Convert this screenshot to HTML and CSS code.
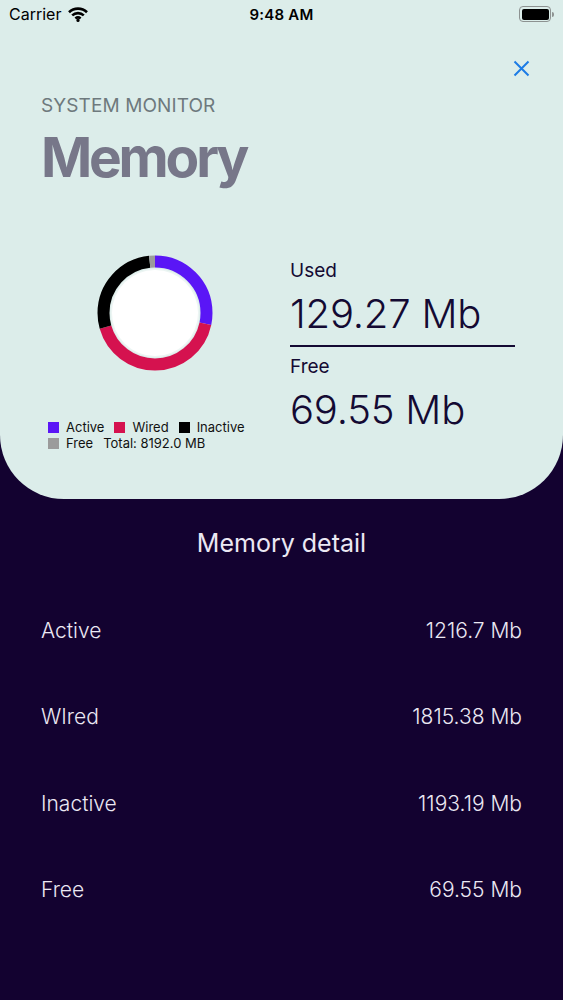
FILE: index.html
```html
<!DOCTYPE html>
<html lang="en">
<head>
    <meta charset="UTF-8">
    <meta name="viewport" content="width=device-width, initial-scale=1.0">
    <title>System Monitor - Memory</title>
    <link rel="stylesheet" href="styles.css">
</head>
<body>

<div class="card">
    <div class="status-bar">
        <div class="carrier">
            <span>Carrier</span>
            <svg class="wifi" width="20" height="15" viewBox="0 0 20 15">
                <path d="M1 5.2 A13 13 0 0 1 19 5.2" />
                <path d="M4.2 8.4 A8.5 8.5 0 0 1 15.8 8.4" />
                <path d="M7.4 11.4 A4 4 0 0 1 12.6 11.4" />
                <circle cx="10" cy="13.4" r="1.6" />
            </svg>
        </div>
        <div class="time">9:48 AM</div>
        <div class="battery">
            <span class="battery-body"><span class="battery-level"></span></span>
            <span class="battery-nub"></span>
        </div>
    </div>

    <div class="close-row">
        <button class="close" aria-label="Close">
            <svg width="17" height="17" viewBox="0 0 17 17">
                <path d="M1.5 1.5 L15.5 15.5 M15.5 1.5 L1.5 15.5" />
            </svg>
        </button>
    </div>

    <p class="eyebrow">SYSTEM MONITOR</p>
    <h1 class="title">Memory</h1>

    <div class="summary">
        <div class="chart-col">
            <!-- donut: active 102deg, wired 152deg, inactive 100deg, free 6deg -->
            <svg class="donut" width="116" height="116" viewBox="0 0 116 116">
                <g transform="rotate(-90 58 58)">
                    <circle class="seg seg-active" cx="58" cy="58" r="51.5" pathLength="360" stroke-dasharray="102 258" stroke-dashoffset="0" />
                    <circle class="seg seg-wired" cx="58" cy="58" r="51.5" pathLength="360" stroke-dasharray="152 208" stroke-dashoffset="-102" />
                    <circle class="seg seg-inactive" cx="58" cy="58" r="51.5" pathLength="360" stroke-dasharray="100 260" stroke-dashoffset="-254" />
                    <circle class="seg seg-free" cx="58" cy="58" r="51.5" pathLength="360" stroke-dasharray="6 354" stroke-dashoffset="-354" />
                </g>
                <circle class="donut-edge" cx="58" cy="58" r="44.5" />
                <circle class="donut-hole" cx="58" cy="58" r="43" />
            </svg>

            <div class="legend">
                <div class="legend-row">
                    <span class="swatch swatch-active"></span><span class="legend-label">Active</span>
                    <span class="swatch swatch-wired"></span><span class="legend-label">Wired</span>
                    <span class="swatch swatch-inactive"></span><span class="legend-label">Inactive</span>
                </div>
                <div class="legend-row">
                    <span class="swatch swatch-free"></span><span class="legend-label">Free</span>
                    <span class="legend-total">Total: 8192.0 MB</span>
                </div>
            </div>
        </div>

        <div class="stats-col">
            <div class="stat stat-used">
                <p class="stat-label">Used</p>
                <p class="stat-value">129.27 Mb</p>
            </div>
            <div class="stat">
                <p class="stat-label">Free</p>
                <p class="stat-value">69.55 Mb</p>
            </div>
        </div>
    </div>
</div>

<section class="detail">
    <h2>Memory detail</h2>
    <div class="detail-list">
        <div class="detail-row"><span>Active</span><span>1216.7 Mb</span></div>
        <div class="detail-row"><span>WIred</span><span>1815.38 Mb</span></div>
        <div class="detail-row"><span>Inactive</span><span>1193.19 Mb</span></div>
        <div class="detail-row"><span>Free</span><span>69.55 Mb</span></div>
    </div>
</section>

</body>
</html>
```

FILE: styles.css
```css
body {
    font-family: Inter, "Noto Sans", sans-serif;
    background-color: #130230; /* Deep navy background */
    color: #ebe8f3;
    margin: 0;
    padding: 0;
}

p, h1, h2 {
    margin: 0;
}

.card {
    background-color: #dcedea; /* Pale mint card */
    color: #140a33;
    height: 499px;
    box-sizing: border-box;
    border-radius: 0 0 64px 64px;
    padding: 0 41px 0 41px;
}

/* status bar */

.status-bar {
    display: flex;
    align-items: center;
    justify-content: space-between;
    height: 28px;
    margin: 0 -41px;
    padding: 0 9px 0 9px;
    font-size: 16px;
    color: #000;
}

.carrier {
    display: flex;
    align-items: center;
    gap: 7px;
    width: 120px;
}

.wifi path {
    fill: none;
    stroke: #000;
    stroke-width: 2.6;
}

.wifi circle {
    fill: #000;
}

.time {
    font-size: 15px;
    font-weight: 600;
    letter-spacing: 0.2px;
}

.battery {
    display: flex;
    align-items: center;
    justify-content: flex-end;
    width: 120px;
}

.battery-body {
    display: flex;
    width: 27px;
    height: 11px;
    padding: 1.5px;
    border: 1px solid #8d9291;
    border-radius: 4px;
}

.battery-level {
    flex: 1;
    background-color: #000;
    border-radius: 2px;
}

.battery-nub {
    width: 2px;
    height: 5px;
    margin-left: 1px;
    background-color: #8d9291;
    border-radius: 0 2px 2px 0;
}

/* header */

.close-row {
    display: flex;
    justify-content: flex-end;
    margin-top: 32px;
    margin-right: -8px;
}

.close {
    display: flex;
    background: none;
    border: none;
    padding: 0;
    cursor: pointer;
}

.close path {
    stroke: #1c7ce6; /* iOS blue */
    stroke-width: 2;
    fill: none;
}

.eyebrow {
    margin-top: 17px;
    font-size: 19px;
    line-height: 23px;
    color: #6e797d;
    letter-spacing: 0.1px;
}

.title {
    margin-top: 10px;
    font-size: 55px;
    line-height: 60px;
    font-weight: 700;
    color: #777789;
    letter-spacing: -3.2px;
}

/* summary */

.summary {
    display: flex;
    margin-top: 69px;
}

.chart-col {
    width: 228px;
    display: flex;
    flex-direction: column;
    align-items: center;
}

.donut {
    display: block;
    margin-top: -1px;
}

.seg {
    fill: none;
    stroke-width: 12;
}

.seg-active { stroke: #5a16f6; }
.seg-wired { stroke: #d5124f; }
.seg-inactive { stroke: #000; }
.seg-free { stroke: #9b9b9b; }

.donut-edge {
    fill: rgba(255, 255, 255, 0.45);
}

.donut-hole {
    fill: #fff;
}

.legend {
    align-self: flex-start;
    margin: 48px 0 0 7px;
    font-size: 13px;
    line-height: 16px;
    color: #111;
}

.legend-row {
    display: flex;
    align-items: center;
}

.swatch {
    width: 11px;
    height: 11px;
    margin-right: 7px;
}

.legend-label {
    margin-right: 10px;
}

.swatch-active { background-color: #5a16f6; }
.swatch-wired { background-color: #d5124f; }
.swatch-inactive { background-color: #000; }
.swatch-free { background-color: #9b9b9b; }

.stats-col {
    width: 225px;
    margin-left: 21px;
    padding-top: 3px;
}

.stat-label {
    font-size: 19px;
    line-height: 23px;
}

.stat-value {
    margin-top: 8px;
    font-size: 40px;
    line-height: 48px;
    font-weight: 300;
    letter-spacing: -0.2px;
}

.stat-used {
    border-bottom: 2px solid #140a33;
    padding-bottom: 7px;
    margin-bottom: 8px;
}

/* detail list */

.detail {
    padding: 29px 41px 0 41px;
}

.detail h2 {
    font-size: 25px;
    line-height: 30px;
    font-weight: 400;
    text-align: center;
}

.detail-list {
    display: flex;
    flex-direction: column;
    gap: 59.3px;
    margin-top: 59px;
}

.detail-row {
    display: flex;
    justify-content: space-between;
    font-size: 21px;
    line-height: 27px;
    font-weight: 300;
}
```
